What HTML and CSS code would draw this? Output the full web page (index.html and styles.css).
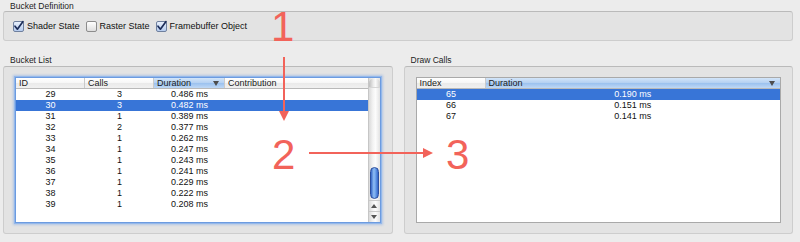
FILE: index.html
```html
<!DOCTYPE html>
<html lang="en">
<head>
    <meta charset="UTF-8">
    <title>Bucket Profiler</title>
    <link rel="stylesheet" href="styles.css">
</head>
<body>
<div class="window">

    <div class="group-label first">Bucket Definition</div>
    <div class="group def">
        <label class="check"><span class="box on"><svg width="11" height="11" viewBox="0 0 11 11"><path d="M2 5.2 L4.4 8.2 L10 0.6" fill="none" stroke="#1b2c58" stroke-width="1.7" stroke-linecap="round" stroke-linejoin="round"/></svg></span>Shader State</label>
        <label class="check"><span class="box"></span>Raster State</label>
        <label class="check"><span class="box on"><svg width="11" height="11" viewBox="0 0 11 11"><path d="M2 5.2 L4.4 8.2 L10 0.6" fill="none" stroke="#1b2c58" stroke-width="1.7" stroke-linecap="round" stroke-linejoin="round"/></svg></span>Framebuffer Object</label>
    </div>

    <div class="panels">
        <div class="panel">
            <div class="group-label">Bucket List</div>
            <div class="group list-box">
                <div class="table focused bucket">
                    <div class="table-body">
                        <div class="row head">
                            <span>ID</span>
                            <span>Calls</span>
                            <span class="sorted">Duration<i class="arrow"></i></span>
                            <span>Contribution</span>
                        </div>
                        <div class="row"><span>29</span><span>3</span><span>0.486 ms</span><span></span></div>
                        <div class="row sel"><span>30</span><span>3</span><span>0.482 ms</span><span></span></div>
                        <div class="row"><span>31</span><span>1</span><span>0.389 ms</span><span></span></div>
                        <div class="row"><span>32</span><span>2</span><span>0.377 ms</span><span></span></div>
                        <div class="row"><span>33</span><span>1</span><span>0.262 ms</span><span></span></div>
                        <div class="row"><span>34</span><span>1</span><span>0.247 ms</span><span></span></div>
                        <div class="row"><span>35</span><span>1</span><span>0.243 ms</span><span></span></div>
                        <div class="row"><span>36</span><span>1</span><span>0.241 ms</span><span></span></div>
                        <div class="row"><span>37</span><span>1</span><span>0.229 ms</span><span></span></div>
                        <div class="row"><span>38</span><span>1</span><span>0.222 ms</span><span></span></div>
                        <div class="row"><span>39</span><span>1</span><span>0.208 ms</span><span></span></div>
                    </div>
                    <div class="scrollbar">
                        <div class="sb-cap"></div>
                        <div class="sb-track"><div class="sb-thumb"></div></div>
                        <div class="sb-btn"><i class="tri up"></i></div>
                        <div class="sb-btn"><i class="tri down"></i></div>
                    </div>
                </div>
            </div>
        </div>

        <div class="panel">
            <div class="group-label">Draw Calls</div>
            <div class="group list-box">
                <div class="table draws">
                    <div class="table-body">
                        <div class="row head">
                            <span>Index</span>
                            <span class="sorted">Duration<i class="arrow"></i></span>
                        </div>
                        <div class="row sel"><span>65</span><span>0.190 ms</span></div>
                        <div class="row"><span>66</span><span>0.151 ms</span></div>
                        <div class="row"><span>67</span><span>0.141 ms</span></div>
                    </div>
                </div>
            </div>
        </div>
    </div>

    <!-- annotation overlay -->
    <svg class="arrows" width="800" height="242" viewBox="0 0 800 242">
        <line x1="284" y1="57" x2="284" y2="113" stroke="#f2635a" stroke-width="2"/>
        <polygon points="279,111 289,111 284,121" fill="#f2635a"/>
        <line x1="309" y1="153" x2="425" y2="153" stroke="#f2635a" stroke-width="2"/>
        <polygon points="423,148 423,158 433,153" fill="#f2635a"/>
    </svg>
    <span class="note n1">1</span>
    <span class="note n2">2</span>
    <span class="note n3">3</span>

</div>
</body>
</html>
```

FILE: styles.css
```css
html, body {
    margin: 0;
    padding: 0;
}

body {
    background: #ececec;
    font-family: "Liberation Sans", Arial, sans-serif;
    font-size: 9px;
    color: #111;
}

.window {
    position: relative;
    width: 800px;
    height: 242px;
    padding: 0 7px 0 3px;
    box-sizing: border-box;
    overflow: hidden;
}

.group-label {
    font-size: 8.5px;
    line-height: 9px;
    padding: 0 0 1px 7px;
    color: #1c1c1c;
}

.group-label.first {
    padding-top: 2px;
    padding-bottom: 0;
}

.group {
    background: #e3e3e3;
    border: 1px solid #cdcdcd;
    border-top-color: #bababa;
    border-radius: 3px;
    box-sizing: border-box;
}

.def {
    height: 30px;
    display: flex;
    align-items: center;
    padding-left: 9px;
}

.check {
    display: flex;
    align-items: center;
    gap: 3px;
    margin-right: 6px;
    line-height: 11px;
}

.box {
    width: 11px;
    height: 11px;
    box-sizing: border-box;
    border: 1px solid #8c8c8c;
    border-radius: 2px;
    background: linear-gradient(#ffffff, #dedede);
}

.box.on {
    background: linear-gradient(#e8f0fc, #b5cbee);
    border-color: #6f809e;
}

.box svg {
    display: block;
    overflow: visible;
    margin: -1px 0 0 -1px;
}

.panels {
    display: flex;
    gap: 11px;
    margin-top: 15px;
}

.panel {
    flex: 1;
}

.list-box {
    height: 168px;
    padding: 10px 11px;
    display: flex;
}

.table {
    flex: 1;
    display: flex;
    background: #fff;
    border: 1px solid #a9a9a9;
}

.table.focused {
    border-color: #6c9be0;
    box-shadow: 0 0 0 1px #94b8ea, 0 0 2px 2px rgba(120, 165, 230, 0.45);
}

.table-body {
    flex: 1;
}

.row {
    display: grid;
    height: 11px;
    line-height: 11px;
}

.bucket .row {
    grid-template-columns: 69px 69px 71px 1fr;
}

.draws .row {
    grid-template-columns: 69px 1fr;
}

.row span {
    text-align: center;
    white-space: nowrap;
}

.row.sel {
    background: #3875d7;
    color: #fff;
}

.row.head {
    height: 11px;
    line-height: 10px;
    box-sizing: border-box;
    background: linear-gradient(#ffffff, #f6f6f6 50%, #eaeaea 51%, #f0f0f0);
    border-bottom: 1px solid #b9b9b9;
    color: #1a1a1a;
}

.row.head span {
    display: flex;
    align-items: center;
    text-align: left;
    padding-left: 3px;
    border-right: 1px solid #cacaca;
}

.row.head span:last-child {
    border-right: none;
}

.row.head .sorted {
    background: linear-gradient(#d3e5f9, #b3d0f2 50%, #9ac1ef 51%, #bfd8f5);
}

.arrow {
    margin-left: auto;
    margin-right: 5px;
    width: 0;
    height: 0;
    border-left: 3px solid transparent;
    border-right: 3px solid transparent;
    border-top: 5px solid #4d4d4d;
}

.scrollbar {
    width: 12px;
    box-sizing: border-box;
    display: flex;
    flex-direction: column;
    border-left: 1px solid #c6c6c6;
    background: linear-gradient(to right, #dadada, #f3f3f3 35%, #fcfcfc 60%, #e2e2e2);
}

.sb-cap {
    height: 9px;
    border-radius: 6px 6px 0 0;
    background: linear-gradient(to right, #bdbdbd, #ececec 40%, #fafafa 60%, #cfcfcf);
    border-bottom: 1px solid #d6d6d6;
}

.sb-track {
    flex: 1;
    display: flex;
    flex-direction: column;
    justify-content: flex-end;
    padding: 0 1px 1px 1px;
}

.sb-thumb {
    height: 32px;
    box-sizing: border-box;
    border: 1px solid #2c4f9e;
    border-radius: 5px;
    background: linear-gradient(to right, #3565c6, #8ebdf4 40%, #74a8ee 60%, #3466c9);
}

.sb-btn {
    height: 11px;
    box-sizing: border-box;
    border-top: 1px solid #c9c9c9;
    display: flex;
    align-items: center;
    justify-content: center;
}

.tri {
    width: 0;
    height: 0;
    border-left: 3px solid transparent;
    border-right: 3px solid transparent;
}

.tri.up {
    border-bottom: 4px solid #555;
}

.tri.down {
    border-top: 4px solid #555;
}

.arrows {
    position: absolute;
    left: 0;
    top: 0;
    pointer-events: none;
}

.note {
    position: absolute;
    font-family: "Liberation Sans", Arial, sans-serif;
    font-size: 42px;
    line-height: 42px;
    color: #f2635a;
}

.n1 {
    left: 271px;
    top: 6px;
}

.n2 {
    left: 272px;
    top: 134px;
}

.n3 {
    left: 446px;
    top: 134px;
}
```
